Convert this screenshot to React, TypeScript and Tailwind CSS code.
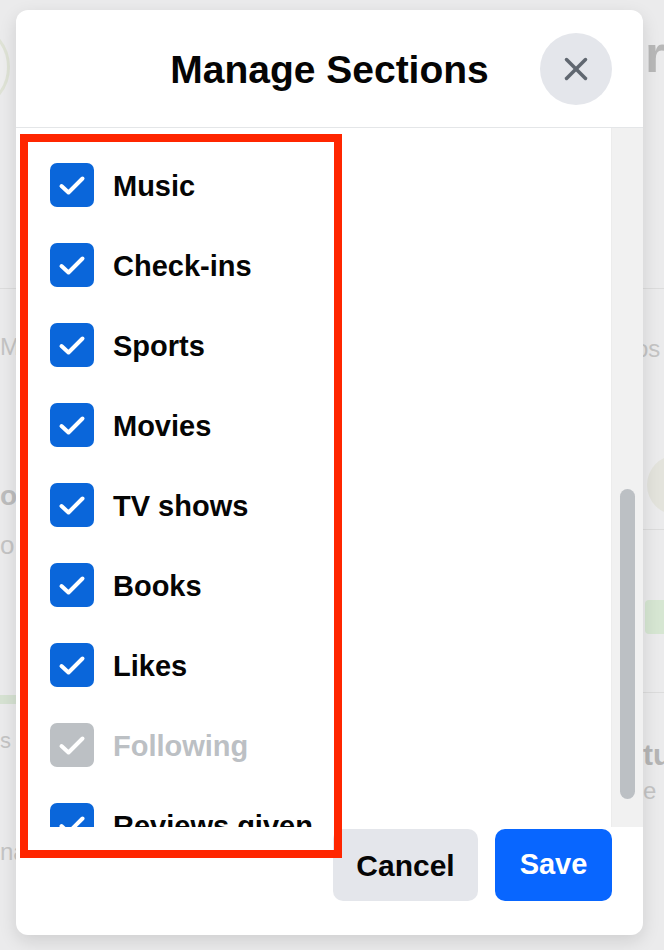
import { X } from 'lucide-react';

const sections = [
  { label: 'Music', checked: true },
  { label: 'Check-ins', checked: true },
  { label: 'Sports', checked: true },
  { label: 'Movies', checked: true },
  { label: 'TV shows', checked: true },
  { label: 'Books', checked: true },
  { label: 'Likes', checked: true },
  { label: 'Following', checked: true, disabled: true },
  { label: 'Reviews given', checked: true },
];

function Checkbox({ disabled }: { disabled?: boolean }) {
  return (
    <div
      className={`w-[44px] h-[44px] shrink-0 rounded-[7px] flex items-center justify-center ${
        disabled ? 'bg-[#bcc0c4]' : 'bg-[#0a66da]'
      }`}
    >
      <svg width="44" height="44" viewBox="0 0 44 44" fill="none">
        <path
          d="M11.5 23 L18.5 29.5 L32.5 15.5"
          stroke="white"
          strokeWidth="4"
          strokeLinecap="round"
          strokeLinejoin="round"
        />
      </svg>
    </div>
  );
}

export default function App() {
  return (
    <div className="w-[664px] h-[950px] overflow-hidden bg-[#ebebec] flex font-['Liberation_Sans',Arial,sans-serif]">
      {/* faded page behind, left edge */}
      <div className="w-[16px] shrink-0 overflow-hidden flex flex-col text-[#c4c4c4]">
        <div className="mt-[22px] -ml-[80px] w-[90px] h-[90px] rounded-full border-[3px] border-[#dfe3d6] bg-[#eeeeee] shrink-0" />
        <div className="mt-[176px] h-px bg-[#dcdcdc] w-full" />
        <div className="mt-[44px] text-[24px] leading-[28px] whitespace-nowrap">Mo</div>
        <div className="mt-[120px] text-[28px] font-bold leading-[30px] text-[#bdbdbd]">o</div>
        <div className="mt-[20px] text-[26px] leading-[28px]">o</div>
        <div className="mt-[136px] h-[9px] bg-[#d6e2d2] w-full" />
        <div className="mt-[24px] text-[22px] leading-[26px]">s</div>
        <div className="mt-[84px] text-[24px] leading-[28px] whitespace-nowrap">na</div>
      </div>

      {/* modal */}
      <div className="relative w-[627px] h-[925px] mt-[10px] shrink-0 bg-white rounded-[12px] shadow-[0_6px_18px_rgba(0,0,0,0.12)] flex flex-col overflow-hidden">
        <div className="h-[118px] shrink-0 grid grid-cols-[1fr_auto_1fr] items-center border-b border-[#e4e6e8]">
          <div />
          <h2 className="text-[39px] font-bold text-[#050505] leading-none pt-[2px]">
            Manage Sections
          </h2>
          <div className="flex justify-end pr-[31px]">
            <button className="w-[72px] h-[72px] rounded-full bg-[#e4e6eb] flex items-center justify-center">
              <X className="w-[38px] h-[38px] text-[#606770]" strokeWidth={2.2} />
            </button>
          </div>
        </div>

        <div className="h-[699px] shrink-0 flex">
          <div className="flex-1 overflow-hidden pt-[17px] pl-[34px]">
            {sections.map((s) => (
              <div key={s.label} className="h-[80px] flex items-center gap-[19px]">
                <Checkbox disabled={s.disabled} />
                <span
                  className={`text-[29px] font-bold leading-none pt-[2px] ${
                    s.disabled ? 'text-[#bcc0c4]' : 'text-[#050505]'
                  }`}
                >
                  {s.label}
                </span>
              </div>
            ))}
          </div>
          <div className="w-[32px] shrink-0 bg-[#f1f1f1] border-l border-[#ececec] pl-[8px]">
            <div className="mt-[361px] w-[15px] h-[310px] rounded-full bg-[#bcc0c4]" />
          </div>
        </div>

        <div className="flex-1 flex justify-end items-start gap-[17px] pt-[2px] pr-[31px]">
          <button className="w-[145px] h-[72px] rounded-[10px] bg-[#e4e6eb] text-[30px] font-bold text-[#050505]">
            Cancel
          </button>
          <button className="w-[117px] h-[72px] rounded-[10px] bg-[#0866ff] text-[29px] font-bold text-white">
            Save
          </button>
        </div>

        {/* red annotation box */}
        <div className="absolute left-[4px] top-[124px] w-[322px] h-[724px] border-[8px] border-[#ff2600] pointer-events-none" />
      </div>

      {/* faded page behind, right edge */}
      <div className="flex-1 overflow-hidden flex flex-col text-[#c4c4c4]">
        <div className="mt-[28px] pl-[2px] text-[52px] font-bold leading-[52px] text-[#b8b8b8]">r</div>
        <div className="mt-[208px] h-px bg-[#dcdcdc] w-full" />
        <div className="mt-[46px] text-[24px] leading-[28px] whitespace-nowrap -ml-[8px]">os</div>
        <div className="mt-[92px] ml-[4px] w-[60px] h-[60px] rounded-full bg-[#e3e3dc] shrink-0" />
        <div className="mt-[14px] h-px bg-[#dcdcdc] w-full" />
        <div className="mt-[70px] ml-[2px] w-[40px] h-[34px] rounded-[4px] bg-[#d6e6d2] shrink-0" />
        <div className="mt-[58px] h-px bg-[#dcdcdc] w-full" />
        <div className="mt-[46px] text-[30px] font-bold leading-[32px] text-[#b5b5b5] whitespace-nowrap">tu</div>
        <div className="mt-[6px] text-[24px] leading-[28px]">e</div>
      </div>
    </div>
  );
}
